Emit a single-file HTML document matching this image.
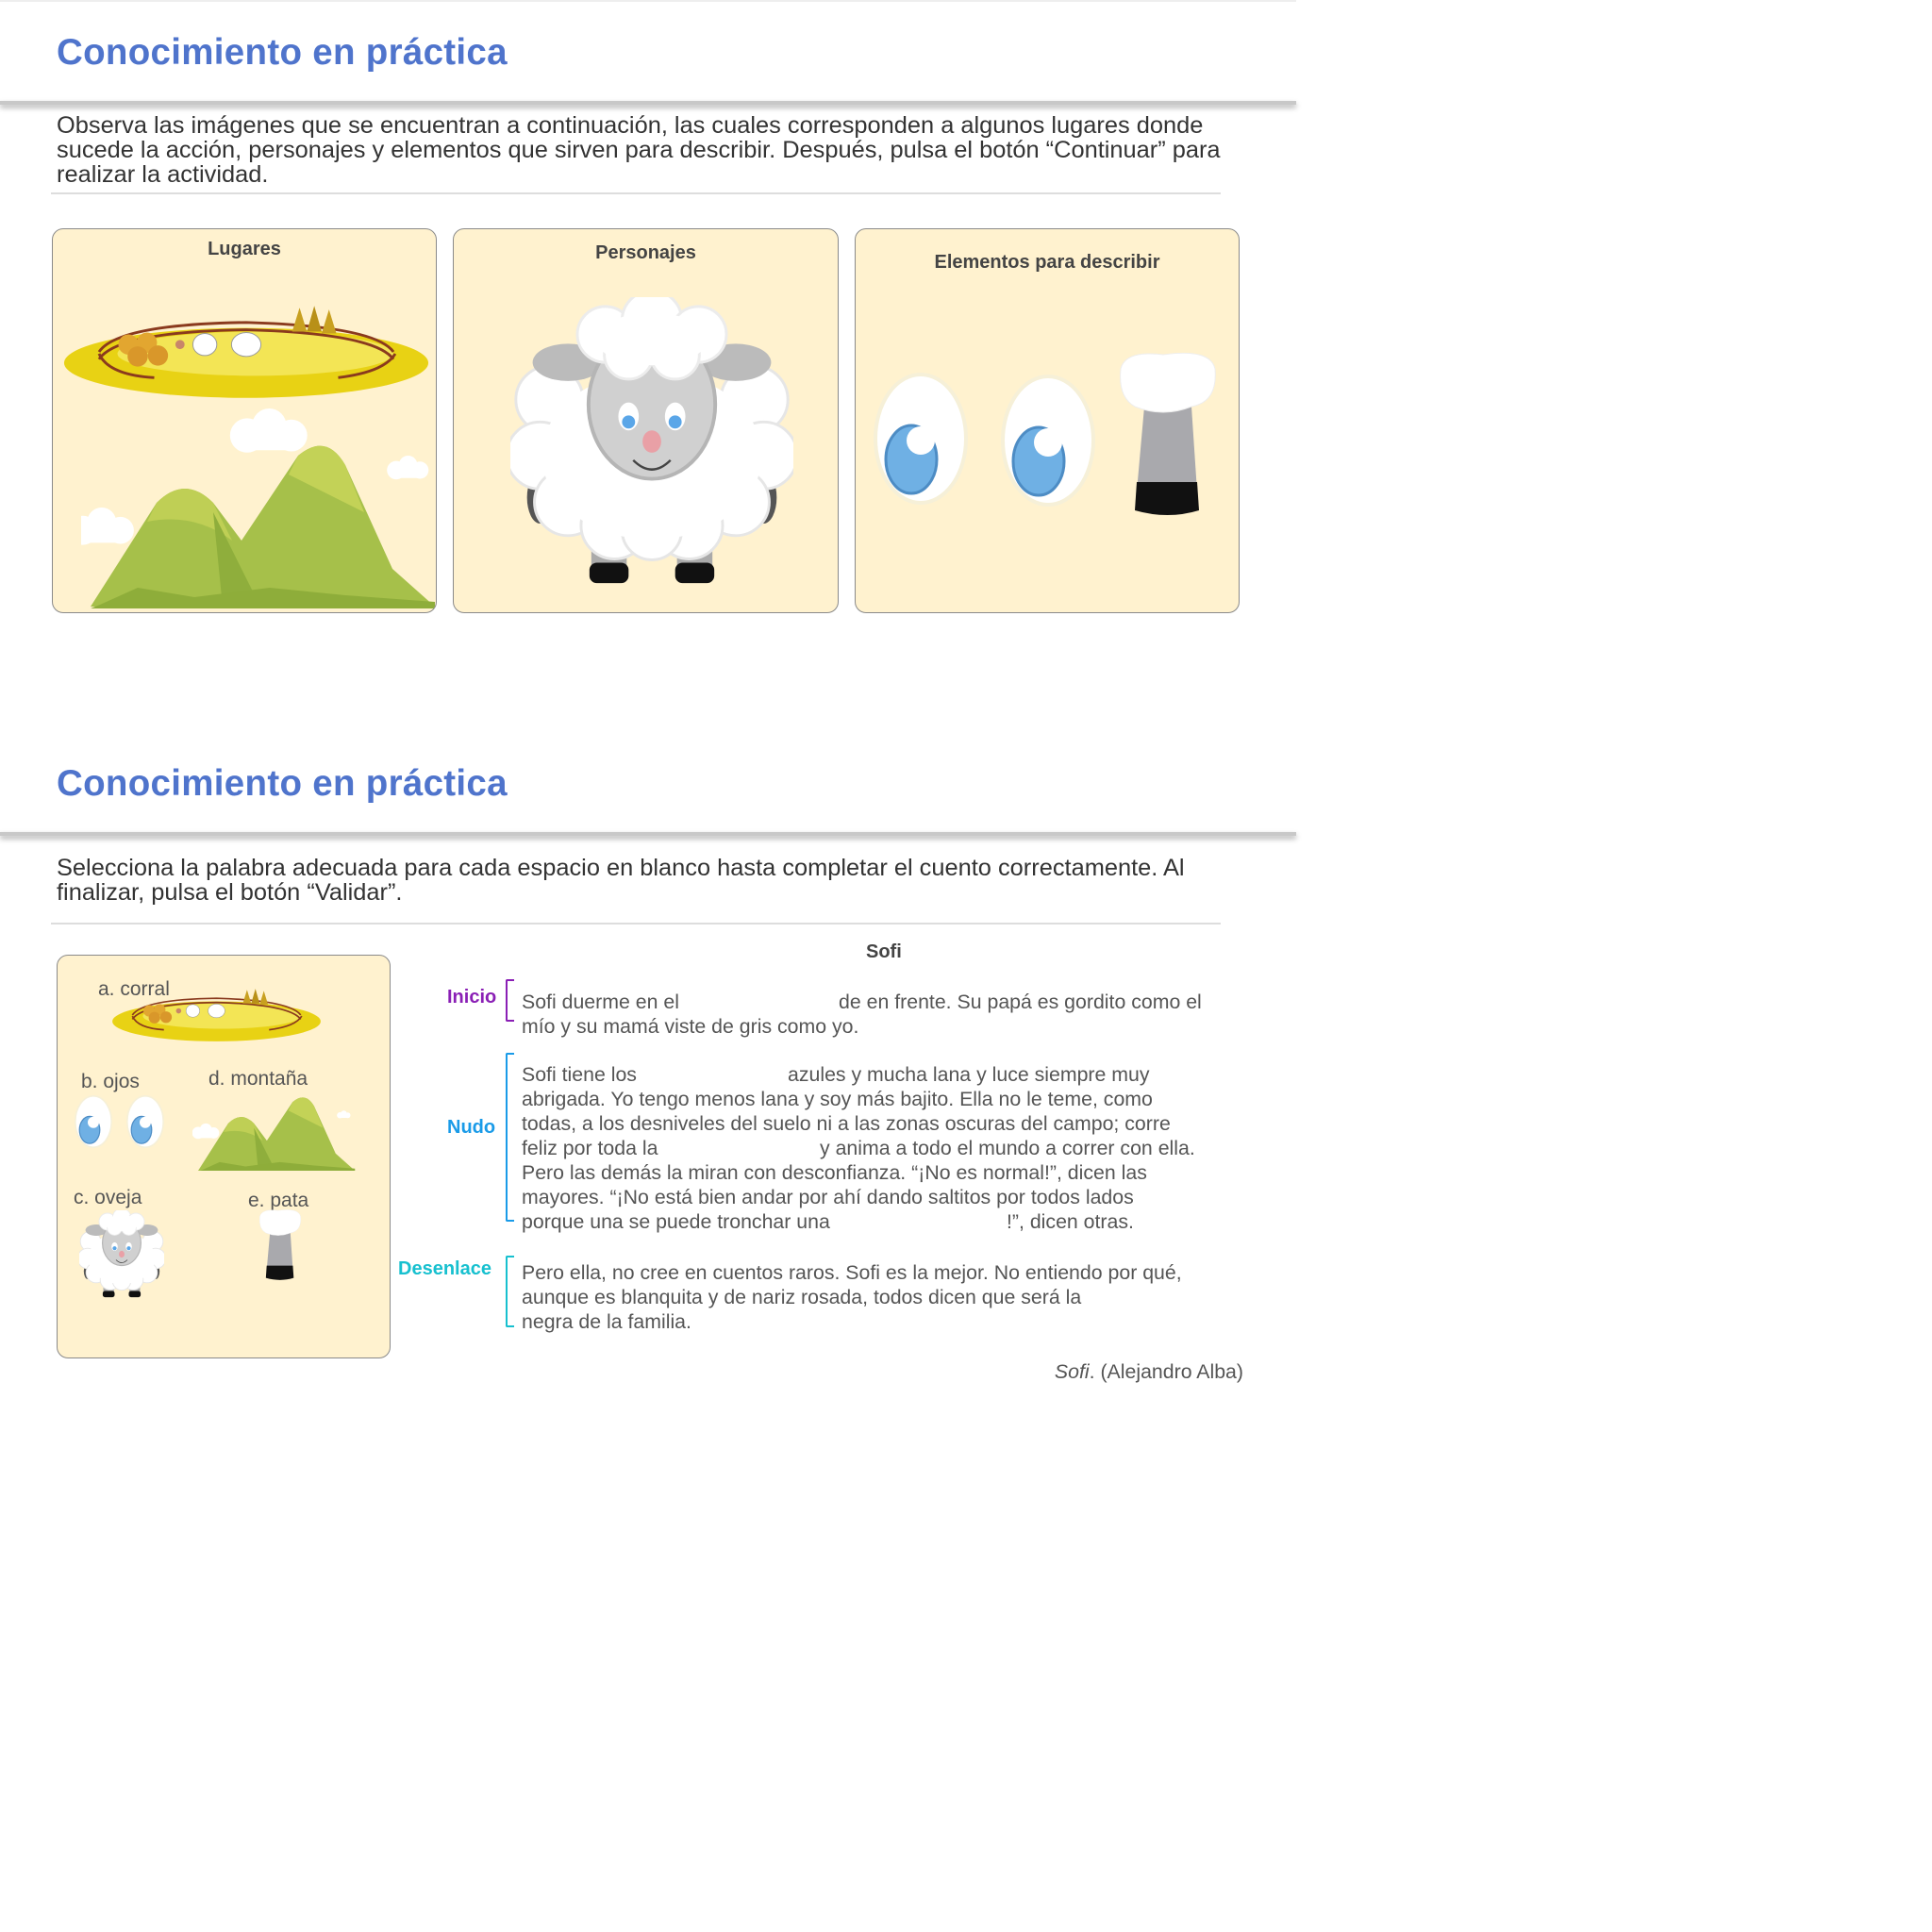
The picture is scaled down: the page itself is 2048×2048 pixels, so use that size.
<!DOCTYPE html>
<html><head><meta charset="utf-8">
<style>
*{margin:0;padding:0;box-sizing:border-box}
body{width:2048px;height:2048px;background:#fff;position:relative;overflow:hidden;font-family:"Liberation Sans",sans-serif;color:#3a3a3a}
.a{position:absolute;white-space:nowrap}
.title{font-size:38.5px;font-weight:bold;color:#4f74cc;letter-spacing:0.3px}
.hdr{position:absolute;left:0;width:1374px;height:4px;background:#c8c8c8;box-shadow:0 3px 6px rgba(0,0,0,.35)}
.p{font-size:25.4px;line-height:26px;color:#333}
.hr{position:absolute;left:54px;width:1240px;height:2px;background:#ddd}
.card{position:absolute;background:#fff2cf;border:1.5px solid #8a8a8a;border-radius:12px;overflow:hidden}
.ct{font-size:20px;font-weight:bold;color:#444;position:absolute;width:100%;text-align:center}
.s{font-size:21.3px;line-height:26px;color:#555}
.lab{font-size:20px;font-weight:bold}
.br{position:absolute;border:2px solid;border-right:none;width:9px;border-radius:2px 0 0 2px}
.it{font-size:21px;color:#555}
</style></head><body>
<svg width="0" height="0" style="position:absolute">
<defs>
<g id="corral">
<ellipse cx="200" cy="62" rx="198" ry="38" fill="#e8d214"/>
<ellipse cx="210" cy="52" rx="150" ry="24" fill="#f3e555"/>
<path d="M40 50 Q60 20 200 18 Q340 22 360 50" fill="none" stroke="#8a3a1e" stroke-width="3"/>
<path d="M40 58 Q60 28 200 26 Q340 30 360 58" fill="none" stroke="#8a3a1e" stroke-width="3"/>
<path d="M40 52 Q50 75 100 78" fill="none" stroke="#8a3a1e" stroke-width="3"/>
<path d="M300 78 Q350 72 362 52" fill="none" stroke="#8a3a1e" stroke-width="3"/>
<circle cx="72" cy="42" r="11" fill="#e2a630"/><circle cx="92" cy="40" r="11" fill="#e2a630"/><circle cx="82" cy="55" r="11" fill="#d9972a"/><circle cx="104" cy="54" r="11" fill="#d9972a"/>
<polygon points="250,28 258,2 266,28" fill="#c8a020"/><polygon points="266,28 274,0 282,28" fill="#b89018"/><polygon points="282,30 290,4 298,30" fill="#c8a020"/>
<ellipse cx="155" cy="42" rx="13" ry="12" fill="#fff" stroke="#999"/><ellipse cx="200" cy="42" rx="16" ry="13" fill="#fff" stroke="#999"/><circle cx="128" cy="42" r="5" fill="#c8866a"/>
</g>
<g id="cloud"><circle cx="20" cy="22" r="14" fill="#fff"/><circle cx="38" cy="14" r="14" fill="#fff"/><circle cx="56" cy="22" r="13" fill="#fff"/><rect x="10" y="20" width="56" height="14" rx="7" fill="#fff"/></g>
<g id="mount">
<path d="M10 180 L80 70 Q110 40 140 70 L170 110 L230 20 Q260 -5 280 30 L330 140 L375 180 Z" fill="#a6c04a"/>
<path d="M230 20 Q260 -5 280 30 L300 80 Q260 60 220 40 Z" fill="#c3d257"/>
<path d="M80 70 Q110 40 140 70 L160 110 Q120 80 70 90 Z" fill="#bfcf55"/>
<path d="M140 80 L190 180 L150 180 Z" fill="#8fae3c"/>
<path d="M20 178 L60 160 L120 170 L200 160 L280 168 L375 175 L375 182 L10 182 Z" fill="#8ead3a"/>
</g>
<g id="sheep">
<ellipse cx="30" cy="215" rx="14" ry="28" fill="#555"/><ellipse cx="270" cy="215" rx="14" ry="28" fill="#555"/>
<rect x="85" y="220" width="38" height="75" fill="#aaa"/><rect x="177" y="220" width="38" height="75" fill="#aaa"/>
<rect x="83" y="285" width="42" height="22" rx="8" fill="#111"/><rect x="175" y="285" width="42" height="22" rx="8" fill="#111"/>
<g fill="#fff" stroke="#e6e6e6" stroke-width="3">
<circle cx="40" cy="110" r="36"/><circle cx="260" cy="110" r="36"/><circle cx="30" cy="170" r="36"/><circle cx="270" cy="170" r="36"/>
<circle cx="60" cy="220" r="36"/><circle cx="240" cy="220" r="36"/><circle cx="110" cy="245" r="36"/><circle cx="190" cy="245" r="36"/><circle cx="150" cy="250" r="32"/>
</g>
<ellipse cx="150" cy="170" rx="118" ry="90" fill="#fff"/>
<ellipse cx="60" cy="70" rx="38" ry="20" fill="#bbb"/><ellipse cx="240" cy="70" rx="38" ry="20" fill="#bbb"/>
<ellipse cx="150" cy="115" rx="68" ry="80" fill="#d0d0d0" stroke="#b5b5b5" stroke-width="4"/>
<g fill="#fff" stroke="#ececec" stroke-width="3"><circle cx="100" cy="40" r="30"/><circle cx="150" cy="25" r="32"/><circle cx="200" cy="40" r="30"/><circle cx="125" cy="62" r="26"/><circle cx="175" cy="62" r="26"/></g>
<ellipse cx="150" cy="45" rx="60" ry="28" fill="#fff"/>
<ellipse cx="125" cy="128" rx="11" ry="15" fill="#fff"/><ellipse cx="175" cy="128" rx="11" ry="15" fill="#fff"/>
<circle cx="125" cy="134" r="7" fill="#5aa6e8"/><circle cx="175" cy="134" r="7" fill="#5aa6e8"/>
<ellipse cx="150" cy="155" rx="10" ry="12" fill="#e9a0a6"/>
<path d="M130 175 Q150 195 170 175" fill="none" stroke="#444" stroke-width="2.5"/>
</g>
<g id="eye"><ellipse cx="50" cy="70" rx="48" ry="68" fill="#fff" stroke="#f6f0d8" stroke-width="4"/><ellipse cx="40" cy="92" rx="27" ry="36" fill="#6fb0e4" stroke="#4d8cc4" stroke-width="3"/><circle cx="50" cy="72" r="15" fill="#fff"/></g>
<g id="leg"><path d="M30 60 L80 60 L86 150 L22 150 Z" fill="#a9a9ad"/><path d="M22 140 L86 140 L88 170 Q55 180 20 170 Z" fill="#111"/><path d="M5 20 Q10 0 50 5 Q100 -2 105 20 Q108 55 80 60 Q50 72 20 60 Q2 50 5 20 Z" fill="#fff" stroke="#eee"/></g>
</defs></svg>

<div style="position:absolute;left:0;top:0;width:1374px;height:2px;background:#eee"></div>
<div class="a title" style="left:60px;top:34px">Conocimiento en práctica</div>
<div class="hdr" style="top:107px"></div>
<div class="a p" style="left:60px;top:120px">Observa las imágenes que se encuentran a continuación, las cuales corresponden a algunos lugares donde</div>
<div class="a p" style="left:60px;top:146px">sucede la acción, personajes y elementos que sirven para describir. Después, pulsa el botón “Continuar” para</div>
<div class="a p" style="left:60px;top:172px">realizar la actividad.</div>
<div class="hr" style="top:204px"></div>

<div class="card" style="left:55px;top:242px;width:408px;height:408px">
<div class="ct" style="top:10px">Lugares</div>
<svg style="position:absolute;left:10px;top:80px" width="390" height="100" viewBox="0 0 400 100"><use href="#corral"/></svg>
<svg style="position:absolute;left:30px;top:190px" width="380" height="220" viewBox="0 0 380 220"><use href="#mount" transform="translate(0,30)"/><use href="#cloud" transform="translate(150,0) scale(1.3)"/><use href="#cloud" transform="translate(-20,105) scale(1.1)"/><use href="#cloud" transform="translate(320,50) scale(0.7)"/></svg>
</div>
<div class="card" style="left:480px;top:242px;width:409px;height:408px">
<div class="ct" style="top:14px">Personajes</div>
<svg style="position:absolute;left:60px;top:72px" width="300" height="316" viewBox="0 0 300 320"><use href="#sheep"/></svg>
</div>
<div class="card" style="left:906px;top:242px;width:408px;height:408px">
<div class="ct" style="top:24px">Elementos para describir</div>
<svg style="position:absolute;left:16px;top:152px" width="106" height="140" viewBox="0 0 100 140"><use href="#eye"/></svg>
<svg style="position:absolute;left:151px;top:154px" width="106" height="140" viewBox="0 0 100 140"><use href="#eye"/></svg>
<svg style="position:absolute;left:276px;top:128px" width="110" height="180" viewBox="0 0 110 180"><use href="#leg"/></svg>
</div>

<div class="a title" style="left:60px;top:809px">Conocimiento en práctica</div>
<div class="hdr" style="top:882px"></div>
<div class="a p" style="left:60px;top:907px">Selecciona la palabra adecuada para cada espacio en blanco hasta completar el cuento correctamente. Al</div>
<div class="a p" style="left:60px;top:933px">finalizar, pulsa el botón “Validar”.</div>
<div class="hr" style="top:978px"></div>

<div class="card" style="left:60px;top:1012px;width:354px;height:428px">
<div class="a it" style="left:43px;top:24px">a. corral</div>
<svg style="position:absolute;left:57px;top:35px" width="223" height="56" viewBox="0 0 400 100"><use href="#corral"/></svg>
<div class="a it" style="left:25px;top:122px">b. ojos</div>
<div class="a it" style="left:160px;top:119px">d. montaña</div>
<svg style="position:absolute;left:13px;top:148px" width="50" height="56" viewBox="0 0 100 140"><use href="#eye"/></svg>
<svg style="position:absolute;left:68px;top:148px" width="50" height="56" viewBox="0 0 100 140"><use href="#eye"/></svg>
<svg style="position:absolute;left:143px;top:146px" width="176" height="82" viewBox="0 0 380 180"><use href="#mount"/><use href="#cloud" transform="translate(-10,70)"/><use href="#cloud" transform="translate(330,40) scale(.5)"/></svg>
<div class="a it" style="left:17px;top:245px">c. oveja</div>
<div class="a it" style="left:202px;top:248px">e. pata</div>
<svg style="position:absolute;left:23px;top:270px" width="90" height="96" viewBox="0 0 300 320"><use href="#sheep"/></svg>
<svg style="position:absolute;left:212px;top:268px" width="48" height="78" viewBox="0 0 110 180"><use href="#leg"/></svg>
</div>

<div class="a" style="left:918px;top:998px;font-size:20px;font-weight:bold;color:#444">Sofi</div>

<div class="a lab" style="left:474px;top:1046px;color:#8a1fb5">Inicio</div>
<div class="br" style="left:536px;top:1038px;height:45px;border-color:#8a1fb5"></div>
<div class="a lab" style="left:474px;top:1184px;color:#1a9be8">Nudo</div>
<div class="br" style="left:536px;top:1116px;height:179px;border-color:#1a9be8"></div>
<div class="a lab" style="left:422px;top:1334px;color:#17c0cf">Desenlace</div>
<div class="br" style="left:536px;top:1331px;height:76px;border-color:#17c0cf"></div>

<div class="a s" style="left:553px;top:1049px">Sofi duerme en el</div>
<div class="a s" style="left:889px;top:1049px">de en frente. Su papá es gordito como el</div>
<div class="a s" style="left:553px;top:1075px">mío y su mamá viste de gris como yo.</div>

<div class="a s" style="left:553px;top:1126px">Sofi tiene los</div>
<div class="a s" style="left:835px;top:1126px">azules y mucha lana y luce siempre muy</div>
<div class="a s" style="left:553px;top:1152px">abrigada. Yo tengo menos lana y soy más bajito. Ella no le teme, como</div>
<div class="a s" style="left:553px;top:1178px">todas, a los desniveles del suelo ni a las zonas oscuras del campo; corre</div>
<div class="a s" style="left:553px;top:1204px">feliz por toda la</div>
<div class="a s" style="left:869px;top:1204px">y anima a todo el mundo a correr con ella.</div>
<div class="a s" style="left:553px;top:1230px">Pero las demás la miran con desconfianza. “¡No es normal!”, dicen las</div>
<div class="a s" style="left:553px;top:1256px">mayores. “¡No está bien andar por ahí dando saltitos por todos lados</div>
<div class="a s" style="left:553px;top:1282px">porque una se puede tronchar una</div>
<div class="a s" style="left:1067px;top:1282px">!”, dicen otras.</div>

<div class="a s" style="left:553px;top:1336px">Pero ella, no cree en cuentos raros. Sofi es la mejor. No entiendo por qué,</div>
<div class="a s" style="left:553px;top:1362px">aunque es blanquita y de nariz rosada, todos dicen que será la</div>
<div class="a s" style="left:553px;top:1388px">negra de la familia.</div>

<div class="a s" style="right:730px;top:1441px"><i>Sofi</i>. (Alejandro Alba)</div>
</body></html>
